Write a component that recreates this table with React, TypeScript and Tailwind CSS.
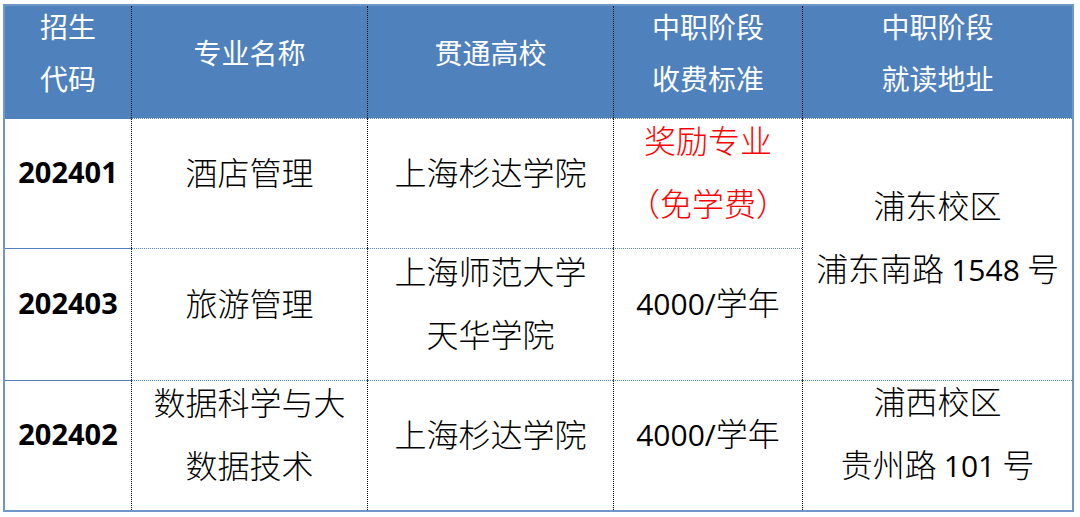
import React from "react";

const cjk = "font-['Noto_Sans_CJK_SC','Noto_Sans',sans-serif]";
const num = "font-['Open_Sans','Noto_Sans_CJK_SC',sans-serif]";

// header cell styles
const th = "p-0 bg-[#4F81BD] text-white font-normal text-center align-middle";
const dot = "border-l border-dotted border-l-black";
const td = "p-0 text-center align-middle border-t border-t-[#4F81BD]";

function Head({ children }: { children: React.ReactNode }) {
  return <div className="-mt-[20px] text-[28px] leading-[52px]">{children}</div>;
}

function Cell({ children, className = "" }: { children: React.ReactNode; className?: string }) {
  // text sits a little above the cell's middle, as in the original sheet
  return <div className={`-mt-[25px] text-[32px] leading-[63px] font-light ${className}`}>{children}</div>;
}

function Num({ children }: { children: React.ReactNode }) {
  return <span className={`${num} font-normal text-[30px]`}>{children}</span>;
}

function Code({ children }: { children: React.ReactNode }) {
  return <div className={`-mt-[25px] ${num} font-bold text-[29px] leading-[63px]`}>{children}</div>;
}

export default function App() {
  return (
    <div className={`w-[1080px] h-[517px] bg-white pt-[4px] pl-[3px] ${cjk}`}>
      <table className="table-fixed border-separate border-spacing-0 w-[1071px] border-2 border-[#6F97C9]">
        <colgroup>
          <col className="w-[126px]" />
          <col className="w-[236px]" />
          <col className="w-[246px]" />
          <col className="w-[189px]" />
          <col />
        </colgroup>
        <thead>
          <tr className="h-[112px]">
            <th className={th}>
              <Head>
                招生
                <br />
                代码
              </Head>
            </th>
            <th className={`${th} ${dot}`}>
              <Head>专业名称</Head>
            </th>
            <th className={`${th} ${dot}`}>
              <Head>贯通高校</Head>
            </th>
            <th className={`${th} ${dot}`}>
              <Head>
                中职阶段
                <br />
                收费标准
              </Head>
            </th>
            <th className={`${th} ${dot}`}>
              <Head>
                中职阶段
                <br />
                就读地址
              </Head>
            </th>
          </tr>
        </thead>
        <tbody className="text-black">
          <tr className="h-[130px]">
            <td className={td}>
              <Code>202401</Code>
            </td>
            <td className={`${td} ${dot}`}>
              <Cell>酒店管理</Cell>
            </td>
            <td className={`${td} ${dot}`}>
              <Cell>上海杉达学院</Cell>
            </td>
            <td className={`${td} ${dot}`}>
              <Cell className="text-[#FF0000]">
                奖励专业
                <br />
                （免学费）
              </Cell>
            </td>
            <td rowSpan={2} className={`${td} ${dot}`}>
              <Cell>
                浦东校区
                <br />
                浦东南路 <Num>1548</Num> 号
              </Cell>
            </td>
          </tr>
          <tr className="h-[132px]">
            <td className={td}>
              <Code>202403</Code>
            </td>
            <td className={`${td} ${dot}`}>
              <Cell>旅游管理</Cell>
            </td>
            <td className={`${td} ${dot}`}>
              <Cell>
                上海师范大学
                <br />
                天华学院
              </Cell>
            </td>
            <td className={`${td} ${dot}`}>
              <Cell>
                <Num>4000/</Num>学年
              </Cell>
            </td>
          </tr>
          <tr className="h-[130px]">
            <td className={td}>
              <Code>202402</Code>
            </td>
            <td className={`${td} ${dot}`}>
              <Cell>
                数据科学与大
                <br />
                数据技术
              </Cell>
            </td>
            <td className={`${td} ${dot}`}>
              <Cell>上海杉达学院</Cell>
            </td>
            <td className={`${td} ${dot}`}>
              <Cell>
                <Num>4000/</Num>学年
              </Cell>
            </td>
            <td className={`${td} ${dot}`}>
              <Cell>
                浦西校区
                <br />
                贵州路 <Num>101</Num> 号
              </Cell>
            </td>
          </tr>
        </tbody>
      </table>
    </div>
  );
}
